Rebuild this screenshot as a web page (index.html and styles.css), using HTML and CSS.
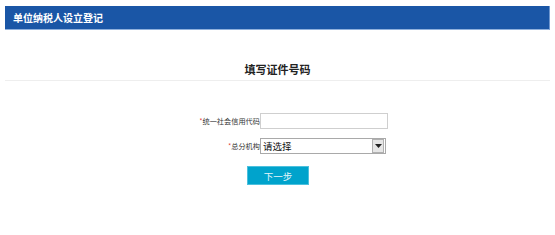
FILE: index.html
```html
<html lang="zh-CN">
  <head>
    <meta charset="UTF-8" />
    <title>单位纳税人设立登记</title>
    <link rel="stylesheet" href="styles.css">
  </head>
  <body>
    <div class="page">
      <div class="header">单位纳税人设立登记</div>
      <div class="section-title">填写证件号码</div>
      <div class="form">
        <div class="form-row">
          <label class="form-label"><span class="req">*</span>统一社会信用代码</label>
          <input class="form-input" type="text" />
        </div>
        <div class="form-row">
          <label class="form-label"><span class="req">*</span>总分机构</label>
          <div class="form-select">
            <span class="select-text">请选择</span>
            <span class="select-btn">
              <svg width="7" height="4" viewBox="0 0 7 4"><path d="M0 0H7L3.5 4Z" fill="#222"/></svg>
            </span>
          </div>
        </div>
        <div class="form-actions">
          <button class="btn-next">下一步</button>
        </div>
      </div>
    </div>
  </body>
</html>
```

FILE: styles.css
```css
body {
  margin: 0;
  font-family: "Noto Sans CJK SC", "Liberation Sans", sans-serif;
  background: #fff;
}
.page {
  padding: 6px 5px 0 5px;
}
.header {
  height: 23px;
  line-height: 23px;
  background-color: #1a56a6;
  border-bottom: 1px solid #8fb0dc;
  border-right: 1px solid #6f97cf;
  color: #fff;
  font-size: 10px;
  font-weight: bold;
  padding-left: 8px;
}
.section-title {
  margin-top: 31px;
  height: 17px;
  line-height: 17px;
  padding-bottom: 2px;
  border-bottom: 1px solid #eeeeee;
  text-align: center;
  font-size: 11px;
  font-weight: bold;
  color: #222;
}
.form {
  padding-top: 32px;
  display: flex;
  flex-direction: column;
}
.form-row {
  display: flex;
  align-items: center;
  height: 16px;
  margin-bottom: 9px;
}
.form-label {
  width: 255px;
  text-align: right;
  font-size: 7.2px;
  color: #333;
}
.req {
  color: #e0403a;
}
.form-input {
  width: 128px;
  height: 16px;
  box-sizing: border-box;
  border: 1px solid #cfcfcf;
  padding: 0;
  margin: 0;
}
.form-select {
  width: 126px;
  height: 16px;
  box-sizing: border-box;
  border: 1px solid #a9a9a9;
  display: flex;
  align-items: center;
  justify-content: space-between;
}
.select-text {
  font-size: 9.5px;
  color: #111;
  padding-left: 2px;
}
.select-btn {
  width: 10px;
  height: 12px;
  margin-right: 1px;
  background: #e6e6e6;
  border: 1px solid #b0b0b0;
  display: flex;
  align-items: center;
  justify-content: center;
}
.form-actions {
  padding-left: 242px;
  margin-top: 3px;
}
.btn-next {
  width: 62px;
  height: 19px;
  background: #00a3cc;
  border: 1px solid #4cc0dd;
  color: #e6f6fb;
  font-size: 9.5px;
  font-family: "Noto Sans CJK SC", sans-serif;
  padding: 0;
}
```
